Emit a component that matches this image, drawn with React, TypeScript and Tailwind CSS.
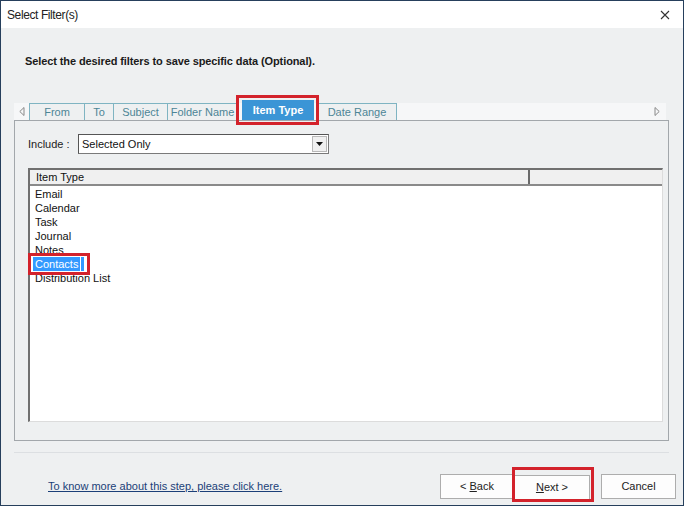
import React from "react";

const items = ["Email", "Calendar", "Task", "Journal", "Notes", "Contacts", "Distribution List"];

const tabs = [
  { label: "From", w: 56 },
  { label: "To", w: 30 },
  { label: "Subject", w: 55 },
  { label: "Folder Name", w: 71 },
];

export default function App() {
  return (
    <div
      className="w-[684px] h-[506px] border border-[#263f5c] bg-[#eef0f1] flex flex-col overflow-hidden text-[#111]"
      style={{ fontFamily: '"Liberation Sans", Arial, sans-serif' }}
    >
      {/* Title bar */}
      <div className="h-[27px] bg-white flex items-center justify-between pl-[6px] pr-[12px] shrink-0">
        <span className="text-[12px] text-[#222] tracking-[-0.4px]">Select Filter(s)</span>
        <svg width="10" height="10" viewBox="0 0 10 10" className="mr-[1px]">
          <path d="M1 1L9 9M9 1L1 9" stroke="#333" strokeWidth="1.1" />
        </svg>
      </div>

      {/* Heading */}
      <div className="mt-[26px] ml-[24px] text-[11px] leading-[14px] font-bold text-[#1a1a1a] tracking-[-0.1px]">
        Select the desired filters to save specific data (Optional).
      </div>

      {/* Tab strip */}
      <div className="mt-[35px] ml-[13px] w-[652px] h-[17px] flex items-end bg-[#f6f7f8] relative">
        <div className="w-[16px] h-full flex items-center justify-center">
          <svg width="6" height="9" viewBox="0 0 6 9">
            <path d="M5 0.5L0.8 4.5L5 8.5Z" fill="none" stroke="#888" strokeWidth="1" />
          </svg>
        </div>
        {tabs.map((t) => (
          <div
            key={t.label}
            style={{ width: t.w }}
            className="h-[17px] border border-b-0 border-[#7fb4c2] -ml-px first:ml-0 flex items-center justify-center text-[11px] text-[#4d8596] bg-[#eef0f1]"
          >
            {t.label}
          </div>
        ))}
        <div className="relative ml-[4px] w-[72px] h-[20px] bg-[#3b95d6] flex items-center justify-center text-[11px] font-bold text-white z-10">
          Item Type
          <div className="absolute -left-[6px] -top-[5px] -right-[5px] -bottom-[5px] border-[3px] border-[#d3222b]" />
        </div>
        <div className="ml-[3px] w-[80px] h-[17px] border border-b-0 border-[#7fb4c2] flex items-center justify-center text-[11px] text-[#4d8596] bg-[#eef0f1]">
          Date Range
        </div>
        <div className="flex-1" />
        <div className="w-[14px] h-full flex items-center justify-center mr-[2px]">
          <svg width="6" height="9" viewBox="0 0 6 9">
            <path d="M1 0.5L5.2 4.5L1 8.5Z" fill="none" stroke="#888" strokeWidth="1" />
          </svg>
        </div>
      </div>

      {/* Panel */}
      <div className="ml-[13px] w-[655px] h-[321px] border border-[#a2a7ab] bg-[#eef0f1] flex flex-col pl-[13px] pr-[5px] pt-[13px]">
        <div className="flex items-center h-[20px]">
          <span className="text-[11px] text-[#222] w-[50px]">Include :</span>
          <div className="w-[251px] h-[20px] bg-white border border-[#7a7a7a] border-t-[#555] border-l-[#555] flex items-center justify-between pl-[3px] pr-[1px]">
            <span className="text-[11px] text-[#111]">Selected Only</span>
            <div className="w-[15px] h-[16px] bg-[#f0f0f0] border border-[#b8b8b8] flex items-center justify-center">
              <svg width="7" height="4" viewBox="0 0 7 4">
                <path d="M0 0H7L3.5 4Z" fill="#111" />
              </svg>
            </div>
          </div>
        </div>

        {/* List view */}
        <div className="mt-[14px] w-[635px] h-[254px] bg-white border border-[#dcdcdc] border-t-[2px] border-l-[2px] border-t-[#707070] border-l-[#707070] flex flex-col">
          <div className="h-[16px] flex bg-[#f0f0f0] border-b-[2px] border-[#8a8a8a] shrink-0">
            <div className="w-[500px] border-r-[2px] border-[#6a6a6a] pl-[6px] text-[11px] leading-[15px] text-[#111]">
              Item Type
            </div>
            <div className="flex-1" />
          </div>
          <div className="flex flex-col pt-[1px]">
            {items.map((it) => (
              <div key={it} className="h-[14px] flex items-center pl-[3px] text-[11px] leading-[14px]">
                {it === "Contacts" ? (
                  <div className="relative flex items-center">
                    <span className="bg-[#3399ff] text-white pl-[2px] pr-[2px] h-[14px] leading-[14px]">Contacts</span>
                    <span className="w-[6px] h-[14px] bg-[#3399ff] ml-[1px] border-r-[3px] border-white" />
                    <div className="absolute -left-[5px] -top-[4px] -right-[3px] -bottom-[4px] border-[3px] border-[#d3222b]" />
                  </div>
                ) : (
                  <span className="pl-[2px]">{it}</span>
                )}
              </div>
            ))}
          </div>
        </div>
      </div>

      {/* Footer */}
      <div className="ml-[13px] w-[655px] mt-[11px] border-t border-[#dcdfe2]" />
      <div className="flex items-start mt-[21px] pl-[47px] pr-[7px]">
        <span className="mt-[4px] text-[11px] text-[#1b3f78] underline">
          To know more about this step, please click here.
        </span>
        <div className="flex-1" />
        <button className="w-[74px] h-[25px] bg-[#fdfdfd] border border-[#adadad] text-[11px] text-[#222]">
          &lt; <span className="underline">B</span>ack
        </button>
        <div className="relative">
          <button className="w-[76px] h-[25px] bg-[#fdfdfd] border border-[#adadad] text-[11px] text-[#222]">
            <span className="underline">N</span>ext &gt;
          </button>
          <div className="absolute -left-[2px] -top-[7px] -right-[4px] -bottom-[2px] border-[3px] border-[#d3222b]" />
        </div>
        <button className="ml-[11px] w-[75px] h-[25px] bg-[#fdfdfd] border border-[#adadad] text-[11px] text-[#222]">
          Cancel
        </button>
      </div>
    </div>
  );
}
